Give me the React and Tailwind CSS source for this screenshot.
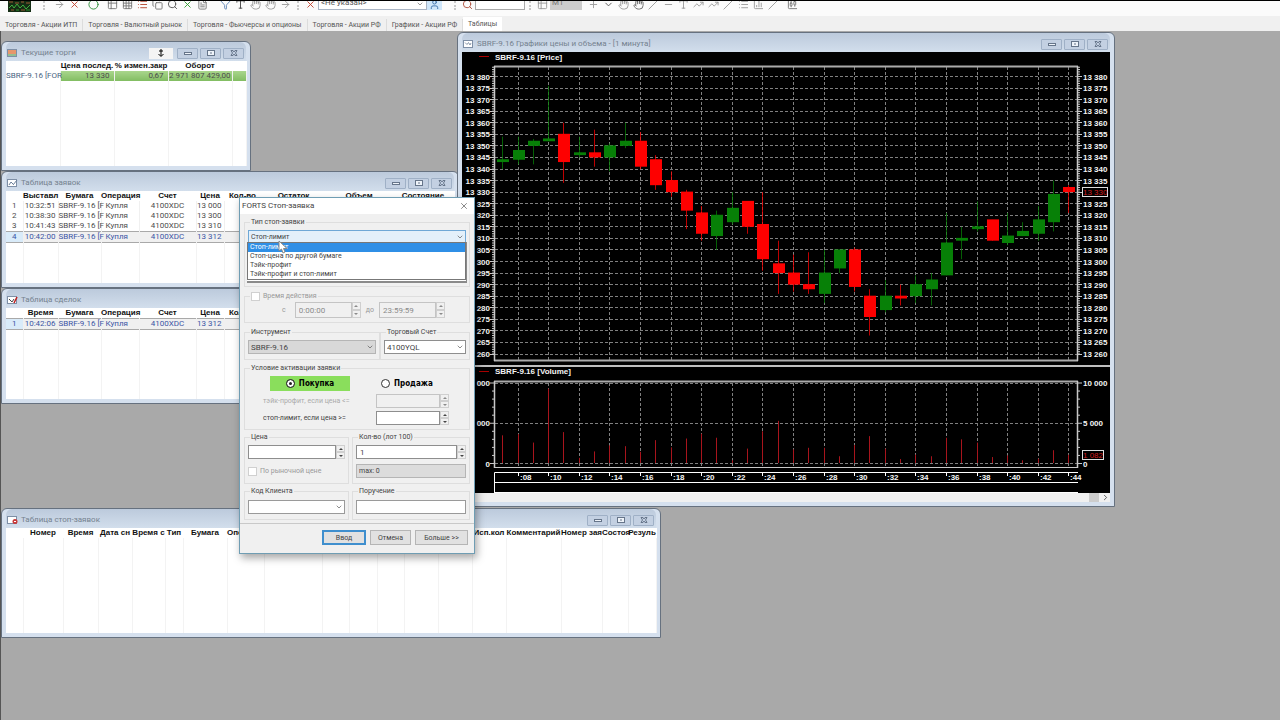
import React, { useState } from 'react';
import {
    ArrowRight, CandlestickChart, ChevronDown, ChevronRight, Circle, Copy, FileText, Filter, Grid3x3, Hand,
    List, Minus, Plus, Search, Table2, TrendingUp, Type, X, User, BarChart3, Slash,
} from 'lucide-react';

const tabs = [
    'Торговля - Акции ИТП',
    'Торговля - Валютный рынок',
    'Торговля - Фьючерсы и опционы',
    'Торговля - Акции РФ',
    'Графики - Акции РФ',
    'Таблицы',
];

// [high, body top, body bottom, low, rising, volume], one per minute
const candles = [
    [13354, 13344, 13343, 13340, true, 3500],
    [13354, 13348, 13344, 13342, true, 3650],
    [13353, 13352, 13350, 13342, true, 2600],
    [13376, 13353, 13352, 13352, true, 9300],
    [13360, 13355, 13343, 13334, false, 3900],
    [13354, 13347, 13346, 13345, true, 700],
    [13357, 13347, 13345, 13341, false, 1500],
    [13351, 13350, 13345, 13339, true, 2250],
    [13360, 13352, 13350, 13349, true, 2150],
    [13356, 13352, 13341, 13340, false, 1450],
    [13346, 13344, 13333, 13331, false, 2900],
    [13339, 13335, 13330, 13328, false, 2000],
    [13331, 13330, 13322, 13314, false, 3100],
    [13324, 13321, 13312, 13309, false, 3700],
    [13322, 13320, 13311, 13305, true, 3200],
    [13330, 13323, 13317, 13316, true, 400],
    [13326, 13326, 13315, 13312, false, 1850],
    [13330, 13316, 13301, 13296, false, 4000],
    [13309, 13299, 13295, 13286, false, 5300],
    [13303, 13295, 13290, 13287, false, 1750],
    [13304, 13290, 13288, 13286, false, 1950],
    [13305, 13295, 13286, 13282, true, 1950],
    [13305, 13305, 13297, 13295, true, 900],
    [13306, 13305, 13289, 13287, false, 2300],
    [13288, 13285, 13276, 13268, false, 3400],
    [13292, 13285, 13279, 13278, true, 1850],
    [13290, 13285, 13284, 13281, false, 550],
    [13294, 13290, 13285, 13282, true, 1100],
    [13295, 13292, 13288, 13281, true, 900],
    [13321, 13308, 13294, 13294, true, 3200],
    [13315, 13310, 13309, 13301, true, 3000],
    [13326, 13315, 13314, 13313, true, 2600],
    [13318, 13318, 13309, 13309, false, 800],
    [13321, 13311, 13308, 13307, true, 1000],
    [13317, 13313, 13311, 13311, true, 400],
    [13324, 13318, 13312, 13309, true, 600],
    [13335, 13329, 13317, 13313, true, 1650],
    [13333, 13332, 13330, 13321, false, 1082],
];

const candleX = (i) => 40.7 + i * 15.3;
const priceY = (p) => 24.5 + (13380 - p) * 2.3125;
const volumeY = (v) => 411.5 - v * 0.00805;
const priceText = (p) => `13 ${p - 13000}`;

const prices = Array.from({ length: 25 }, (_, i) => 13380 - i * 5);
const priceTicks = Array.from({ length: 125 }, (_, i) => 13384 - i);
const volumeTicks = Array.from({ length: 11 }, (_, i) => i * 1000);
const times = Array.from({ length: 19 }, (_, i) => ({ i: i * 2 + 1, label: `:${String(8 + i * 2).padStart(2, '0')}` }));

const PriceChart = () => (
    <svg viewBox="0 0 648 441" className="block w-full bg-black" fontFamily="'Liberation Sans', sans-serif" fontSize="8" fill="#f4f4f4">
        <path d="M17 4.5h10M17 319.5h10" stroke="#a00" />
        <text x="33" y="8" fontWeight="700">SBRF-9.16 [Price]</text>
        <text x="33" y="322" fontWeight="700">SBRF-9.16 [Volume]</text>

        <g stroke="#808080" strokeDasharray="3 2">
            {prices.map(p => <path key={p} d={`M33 ${Math.floor(priceY(p)) + 0.5}H615`} />)}
            {[0, 5000, 10000].map(v => <path key={v} d={`M33 ${Math.floor(volumeY(v)) + 0.5}H615`} />)}
            {times.map(t => <path key={t.i} d={`M${Math.floor(candleX(t.i)) + 0.5} 15V308M${Math.floor(candleX(t.i)) + 0.5} 331V415`} />)}
        </g>

        {candles.map(([high, top, bottom, low, up, volume], i) => {
            const x = Math.floor(candleX(i));
            const color = up ? '#078007' : '#fe0000';
            return (
                <g key={i}>
                    <path d={`M${x + 0.5} ${priceY(high)}V${priceY(low)}`} stroke={color} opacity="0.75" />
                    <rect x={x - 5} y={priceY(top) - 0.5} width="12" height={(top - bottom) * 2.3125 + 0.5} fill={color} />
                    <path d={`M${x + 0.5} ${volumeY(volume)}V411`} stroke="#a8141c" />
                </g>
            );
        })}

        <g fill="none" stroke="#c8c8c8">
            <path d="M32 14.5H616M32 308.5H616M32 329.5H616" stroke="#aaa" strokeWidth="2" />
            <path d="M32.5 14V309M615.5 14V309M32.5 329V416M615.5 329V416" strokeWidth="1.5" />
            <path d="M32 415.5H616" />
            <path d="M0 314H648" stroke="#fff" strokeWidth="1.5" />
            <path d="M32.5 441V420.5H616M32 430.5H616M32 440.5H616" stroke="#fff" />
            {priceTicks.map(p => <path key={p} d={`M30 ${priceY(p)}h2M616 ${priceY(p)}h2`} />)}
            {prices.map(p => <path key={p} d={`M28 ${Math.floor(priceY(p)) + 0.5}h4M616 ${Math.floor(priceY(p)) + 0.5}h4`} />)}
            {volumeTicks.map(v => <path key={v} d={`M${v % 5000 ? 30 : 28} ${volumeY(v)}H32M616 ${volumeY(v)}h${v % 5000 ? 2 : 4}`} />)}
        </g>

        {prices.map(p => (
            <g key={p} fontWeight="700">
                <text x="28" y={priceY(p) + 3} textAnchor="end">{priceText(p)}</text>
                {p !== 13330 && <text x="621" y={priceY(p) + 3}>{priceText(p)}</text>}
            </g>
        ))}
        {[['0', 0], ['5 000', 5000], ['10 000', 10000]].map(([label, v]) => (
            <g key={v} fontWeight="700">
                <text x="28" y={volumeY(v) + 3} textAnchor="end">{label}</text>
                <text x="621" y={volumeY(v) + 3}>{label}</text>
            </g>
        ))}
        {times.map(t => (
            <g key={t.label} fontWeight="700">
                <path d={`M${Math.floor(candleX(t.i)) + 0.5} 421v3`} stroke="#fff" />
                <text x={Math.floor(candleX(t.i)) + 2} y="428">{t.label}</text>
            </g>
        ))}

        <rect x="620.5" y="135.5" width="25" height="9" fill="#000" stroke="#ddd" />
        <text x="621" y="143" fill="#d01c1c">13 330</text>
        <rect x="620.5" y="398.5" width="21" height="9" fill="#000" stroke="#ddd" />
        <text x="621" y="406" fill="#d01c1c">1 082</text>
    </svg>
);

const TitleButton = ({ label, children }) => (
    <button type="button" aria-label={label} className="flex h-[11px] w-[21px] items-center justify-center rounded-[1px] border border-[#9fb0c6] bg-[#c3d0e2] text-[#66758a]">
        {children}
    </button>
);

const Window = ({ title, icon, pin, className, children }) => (
    <section className={`absolute flex flex-col rounded-t-md border border-[#66717f] bg-[#d5e0ee] px-1 pb-1 ${className}`}>
        <header className="flex h-[19px] shrink-0 items-center gap-[2px] rounded-t-md bg-linear-to-b from-[#bccadc] to-[#d2deec] pr-[2px] pl-px pt-[3px]">
            {icon}
            <h2 className="flex-1 pl-px text-[8px] leading-[10px] text-[#75828f] font-[Roboto,sans-serif] whitespace-nowrap">{title}</h2>
            {pin && (
                <button type="button" aria-label="Закрепить" className="mr-[2px] flex h-[11px] w-[24px] items-center justify-center bg-[#f4f4f4] text-black">
                    <svg viewBox="0 0 8 8" className="h-2 w-2" fill="none" stroke="currentColor"><path d="M4 0v7M2 2h4M1.500 5L4 7.500 6.500 5" /></svg>
                </button>
            )}
            <TitleButton label="Свернуть">
                <svg viewBox="0 0 8 6" className="h-[6px] w-2" fill="#eef3f9" stroke="currentColor"><rect x="0.500" y="2.500" width="7" height="2" /></svg>
            </TitleButton>
            <TitleButton label="Развернуть">
                <svg viewBox="0 0 8 6" className="h-[6px] w-2" fill="#eef3f9" stroke="currentColor"><rect x="0.500" y="0.500" width="7" height="5" /><path d="M3 3h2" /></svg>
            </TitleButton>
            <TitleButton label="Закрыть">
                <svg viewBox="0 0 8 6" className="h-[6px] w-2" fill="none" stroke="currentColor"><path d="M1 .5h2l1 1.500 1-1.500h2L5.500 3 7 5.500H5L4 4 3 5.500H1L2.500 3z" /></svg>
            </TitleButton>
        </header>
        {children}
    </section>
);

const Grid = ({ columns, rows, selected, rowClass = '' }) => (
    <table className="h-full w-full table-fixed border-collapse bg-white text-[8px] leading-[10px] text-[#4c4c4c] font-[Roboto,sans-serif]">
        <colgroup>
            {columns.map(([, width], i) => <col key={i} style={{ width }} />)}
        </colgroup>
        <thead>
            <tr className="h-[10px] text-[#111] font-['Liberation_Sans',sans-serif]">
                {columns.map(([label], i) => <th key={i} className="p-0 text-center font-bold whitespace-nowrap">{label}</th>)}
            </tr>
        </thead>
        <tbody>
            {rows.map((row, r) => (
                <tr key={r} className={`h-[10px] ${r === selected ? 'border-y border-[#a9a9a9] bg-[#f0f0f0] text-[#3b55a5]' : ''}`}>
                    {row.map((cell, c) => (
                        <td key={c} className={`border-r border-[#f0f0f0] py-0 whitespace-nowrap ${columns[c][2] || ''} ${c > 0 ? rowClass : ''} ${r === selected && c === 0 ? 'bg-[#d9ebf9]' : ''}`}>
                            {cell}
                        </td>
                    ))}
                </tr>
            ))}
            <tr>
                {columns.map((_, i) => <td key={i} className="border-r border-[#f3f3f3] p-0" />)}
            </tr>
        </tbody>
    </table>
);

const quoteColumns = [['', 54, 'text-[#4a6483]'], ['Цена послед.', 54, 'pr-1 text-right'], ['% измен.закр', 54, 'pr-1 text-right'], ['Оборот', 64, 'pr-px text-right'], ['', 14]];
const orderColumns = [
    ['', 17, 'text-center'], ['Выставл', 35, 'pr-[2px] text-right'], ['Бумага', 43], ['Операция', 38, 'pl-1'], ['Счет', 57, 'text-center'],
    ['Цена', 28, 'pr-[2px] text-right'], ['Кол-во', 37], ['Остаток', 65], ['Объем', 66], ['Состояние', 62],
];
const tradeColumns = [['', 17, 'text-center'], ['Время', 35, 'pr-[2px] text-right'], ...orderColumns.slice(2)];
const stopColumns = [
    ['', 17], ['Номер', 40], ['Время', 35], ['Дата сн', 34], ['Время с', 33], ['Тип', 18], ['Бумага', 44], ['Операция', 37],
    ['', 58], ['', 27], ['', 28], ['', 27], ['', 34], ['', 34], ['Исп.кол', 34], ['Комментарий', 55], ['Номер зая', 41],
    ['Состоя', 26], ['Резуль', 28],
];

const orderRow = (n, time, price) => [n, time, 'SBRF-9.16 [F', 'Купля', '4100XDC', price, '', '', '', ''];
const orders = [
    orderRow('1', '10:32:51', '13 000'),
    orderRow('2', '10:38:30', '13 300'),
    orderRow('3', '10:41:43', '13 310'),
    orderRow('4', '10:42:00', '13 312'),
];

const SheetIcon = ({ accent }) => (
    <svg viewBox="0 0 11 10" className="h-[10px] w-[11px]" fill="none">
        <rect x="0.500" y="1.500" width="9" height="7" fill="#fff" stroke="#7e8fa6" />
        {accent === 'chart' && <path d="M2 3.500l2 2 1.500-2L7 6l1-2" stroke="#8c9aad" />}
        {accent === 'quotes' && <><path d="M1 3h8M1 5h8" stroke="#e0763c" strokeWidth="1.500" /><path d="M1 7h8" stroke="#6fa86f" strokeWidth="1.500" /></>}
        {accent === 'orders' && <path d="M2 7l2-3 2 2M6 7l4-5" stroke="#6b7f99" />}
        {accent === 'trades' && <><path d="M2 4l3 3 2-3" stroke="#444" /><path d="M7 8l3-6" stroke="#c02020" strokeWidth="1.500" /></>}
        {accent === 'stop' && <><circle cx="8" cy="6.500" r="2.500" fill="#c93a3a" /><path d="M7 6.500h2" stroke="#fff" /></>}
    </svg>
);

const Group = ({ legend, className = '', children }) => (
    <fieldset className={`min-w-0 border border-[#dedede] px-[3px] ${className}`}>
        <legend className="mx-[2px] px-px leading-[10px]">{legend}</legend>
        {children}
    </fieldset>
);

const Combo = ({ label, options, className = '' }) => (
    <div className="relative">
        <select aria-label={label} className={`block h-[14px] w-full appearance-none border px-[2px] leading-[11px] ${className}`}>
            {options.map(o => <option key={o}>{o}</option>)}
        </select>
        <ChevronDown size={8} className="pointer-events-none absolute top-[3px] right-[2px] text-[#555]" />
    </div>
);

const Spin = ({ label, disabled, className = 'h-[14px]', ...props }) => (
    <div className={`flex text-[8px] ${disabled ? 'text-[#8a8a8a]' : ''} ${className}`}>
        <input aria-label={label} disabled={disabled} className={`h-full min-w-0 flex-1 border px-[3px] ${disabled ? 'border-[#c4c4c4] bg-[#f0f0f0]' : 'border-[#8e8e8e] bg-white'}`} {...props} />
        <div className="flex w-[9px] flex-col">
            <button type="button" aria-label="Больше" disabled={disabled} className="flex flex-1 items-center justify-center border border-[#cfcfcf] bg-[#f0f0f0]">
                <svg viewBox="0 0 4 2" className="h-[2px] w-1" fill="currentColor"><path d="M2 0l2 2H0z" /></svg>
            </button>
            <button type="button" aria-label="Меньше" disabled={disabled} className="flex flex-1 items-center justify-center border border-[#cfcfcf] bg-[#f0f0f0]">
                <svg viewBox="0 0 4 2" className="h-[2px] w-1" fill="currentColor"><path d="M2 2l2-2H0z" /></svg>
            </button>
        </div>
    </div>
);

const stopTypes = ['Стоп-лимит', 'Стоп-цена по другой бумаге', 'Тэйк-профит', 'Тэйк-профит и стоп-лимит'];

const StopOrderDialog = () => {
    const [side, setSide] = useState('buy');

    return (
        <form role="dialog" aria-label="FORTS Стоп-заявка" className="absolute top-[166px] left-[238px] w-[236px] border border-[#6f9db3] bg-[#f0f0f0] text-[7px] leading-[10px] text-[#444] shadow-[2px_4px_8px_rgba(0,0,0,0.35)] font-[Roboto,sans-serif]">
            <div className="flex h-4 items-center justify-between bg-white pr-[5px] pl-[2px]">
                <h2 className="text-[8px] text-[#444]">FORTS Стоп-заявка</h2>
                <button type="button" aria-label="Закрыть"><X size={10} strokeWidth={1.5} /></button>
            </div>

            <div className="flex flex-col px-1 pt-[3px]">
                <div className="relative">
                    <Group legend="Тип стоп-заявки" className="h-[70px] pt-[3px]">
                        <Combo label="Тип стоп-заявки" options={stopTypes} className="border-[#6fa8d6] bg-[#e3f0fa]" />
                    </Group>
                    <div className="absolute inset-x-[3px] top-[25px] h-[41px] border-r border-b-2 border-[#8a8a8a] bg-white">
                        <ul role="listbox" aria-label="Варианты" className="border border-[#777] bg-white">
                            {stopTypes.map((t, i) => (
                                <li key={t} role="option" aria-selected={i === 0} className={`h-[9px] pl-[2px] leading-[9px] ${i === 0 ? 'bg-[#2f8fe6] text-white' : ''}`}>{t}</li>
                            ))}
                        </ul>
                    </div>
                </div>

                <Group
                    className="mt-1 h-8 pt-px"
                    legend={<label className="flex items-center gap-[3px] text-[#9a9a9a]"><input type="checkbox" disabled className="h-[9px] w-[9px] appearance-none border border-[#d0d0d0] bg-white" />Время действия</label>}
                >
                    <div className="flex items-center justify-end gap-[5px] pr-[21px] text-[#999]">
                        <span className="pr-1">с</span>
                        <Spin label="Время с" disabled defaultValue="0:00:00" className="h-4 w-[66px]" />
                        <span>до</span>
                        <Spin label="Время до" disabled defaultValue="23:59:59" className="h-4 w-[66px]" />
                    </div>
                </Group>

                <div className="mt-1 grid grid-cols-[136px_1fr]">
                    <Group legend="Инструмент" className="h-[33px] pt-[3px]">
                        <Combo label="Инструмент" options={['SBRF-9.16']} className="border-[#b5b5b5] bg-[#d8d8d8] text-[8px]" />
                    </Group>
                    <Group legend="Торговый Счет" className="h-[33px] pt-[3px]">
                        <Combo label="Торговый Счет" options={['4100YQL']} className="border-[#8e8e8e] bg-white text-[8px]" />
                    </Group>
                </div>

                <Group legend="Условие активации заявки" className="mt-[3px] h-[67px] pt-[3px]">
                    <div className="flex h-[15px] gap-[31px] pl-[22px] text-[8px] text-black font-bold font-['DejaVu_Sans_Condensed','DejaVu_Sans',sans-serif]">
                        <label className="flex w-20 items-center justify-center gap-1 bg-[#8ade5c]">
                            <input type="radio" name="side" checked={side === 'buy'} onChange={() => setSide('buy')} className="h-[9px] w-[9px] appearance-none rounded-full border border-[#333] bg-white checked:bg-[#222] checked:shadow-[inset_0_0_0_2px_#fff]" />
                            Покупка
                        </label>
                        <label className="flex items-center gap-1">
                            <input type="radio" name="side" checked={side === 'sell'} onChange={() => setSide('sell')} className="h-[9px] w-[9px] appearance-none rounded-full border border-[#333] bg-white checked:bg-[#222] checked:shadow-[inset_0_0_0_2px_#fff]" />
                            Продажа
                        </label>
                    </div>
                    <div className="mt-[3px] flex items-center justify-between pr-[17px] pl-[15px]">
                        <span className="text-[#aaa]">тэйк-профит, если цена &lt;=</span>
                        <Spin label="тэйк-профит, если цена <=" disabled className="h-[14px] w-[73px]" />
                    </div>
                    <div className="mt-[3px] flex items-center justify-between pr-[17px] pl-[15px]">
                        <span>стоп-лимит, если цена &gt;=</span>
                        <Spin label="стоп-лимит, если цена >=" className="h-[14px] w-[73px]" />
                    </div>
                </Group>

                <div className="mt-[2px] grid grid-cols-[105px_1fr] gap-x-[3px] gap-y-[2px]">
                    <Group legend="Цена" className="h-[52px] pt-[3px]">
                        <Spin label="Цена" />
                        <label className="mt-[5px] flex h-[14px] items-center gap-[3px] text-[#999]">
                            <input type="checkbox" disabled className="h-[9px] w-[9px] appearance-none border border-[#d0d0d0] bg-white" />
                            По рыночной цене
                        </label>
                    </Group>
                    <Group legend="Кол-во (лот 100)" className="h-[52px] pt-[3px]">
                        <Spin label="Кол-во" defaultValue="1" />
                        <input aria-label="Максимум" readOnly value="max: 0" className="mt-[5px] block h-[14px] w-full border border-[#b5b5b5] bg-[#dcdcdc] px-[2px]" />
                    </Group>
                    <Group legend="Код Клиента" className="h-[34px] pt-1">
                        <Combo label="Код Клиента" options={['']} className="border-[#9a9a9a] bg-white" />
                    </Group>
                    <Group legend="Поручение" className="h-[34px] pt-1">
                        <input aria-label="Поручение" className="block h-[14px] w-full border border-[#9a9a9a] bg-white px-1" />
                    </Group>
                </div>
            </div>

            <div className="mt-[3px] flex justify-end gap-1 border-t border-[#c9c9c9] px-[6px] pt-[6px] pb-2">
                <button type="submit" className="flex h-[15px] w-11 items-center justify-center border border-[#3f8fce] bg-[#e1e1e1] ring-1 ring-[#3f8fce] ring-inset">Ввод</button>
                <button type="button" className="h-[15px] w-[41px] border border-[#b5b5b5] bg-[#e1e1e1]">Отмена</button>
                <button type="button" className="h-[15px] w-[53px] border border-[#b5b5b5] bg-[#e1e1e1]">Больше &gt;&gt;</button>
            </div>

            <svg viewBox="0 0 10 14" className="pointer-events-none absolute top-[42px] left-[38px] h-[14px] w-[10px]" fill="#fff" stroke="#888">
                <path d="M1 1v10l2.500-2 1.500 4 2-1-1.500-3.500H9z" />
            </svg>
        </form>
    );
};

const ToolButton = ({ icon: Icon, label, className = 'text-[#9a9a9a]' }) => (
    <button type="button" aria-label={label} className={`flex w-[15px] shrink-0 justify-center ${className}`}><Icon size={11} /></button>
);

const Grip = () => <span className="mx-1 h-4 border-l-2 border-dotted border-[#c9c9c9]" />;

const Toolbar = () => (
    <div role="toolbar" aria-label="Инструменты" className="flex h-4 items-end overflow-hidden border-t border-black bg-[#fbfbfb] pb-1 pl-2">
        <svg viewBox="0 0 23 12" className="h-3 w-[23px] shrink-0">
            <rect width="23" height="12" fill="#142c14" />
            <path d="M1 8l3-3 2 3 3-4 3 4 3-3 3 4 4-4" stroke="#3fae3f" fill="none" />
            <path d="M1 2h4M7 3h4M13 2h3M18 3h4M3 10h3M13 10h4" stroke="#9a5a34" />
            <path d="M8 10h3M18 10h4" stroke="#2f8f2f" />
        </svg>
        <div className="flex items-end pb-[2px] pl-2">
            <Grip />
            <span className="w-[3px]" />
            <ToolButton icon={ArrowRight} label="Соединение" />
            <ToolButton icon={X} label="Разъединить" className="text-[#c2402c]" />
            <ToolButton icon={Circle} label="Обновить" className="ml-1 text-[#2f8f3a]" />
            <ToolButton icon={Table2} label="Таблица" className="ml-1 text-[#777]" />
            <ToolButton icon={Grid3x3} label="Сетка" className="text-[#777]" />
            <ToolButton icon={List} label="Список" className="text-[#b5442c]" />
            <ToolButton icon={Copy} label="Копия" className="text-[#777]" />
            <ToolButton icon={Search} label="Найти" className="text-[#555]" />
            <ToolButton icon={X} label="Excel" className="text-[#2f9a2f]" />
            <ToolButton icon={FileText} label="Документ" className="text-[#777]" />
            <ToolButton icon={Filter} label="Фильтр" className="ml-2 text-[#5f86b8]" />
            <ToolButton icon={Type} label="Текст" className="text-[#444]" />
            <ToolButton icon={Hand} label="Рука" />
            <ToolButton icon={Hand} label="Захват" />
            <ToolButton icon={ArrowRight} label="Далее" />
            <Grip />
            <ToolButton icon={X} label="Снять фильтр" className="text-[#c2402c]" />
            <div className="relative">
                <select aria-label="Фильтр" className="block h-[14px] w-[109px] appearance-none border border-[#a9b4c4] bg-white px-[2px] text-[8px] leading-[10px] text-[#555] font-[Roboto,sans-serif]">
                    <option>&lt;Не указан&gt;</option>
                </select>
                <ChevronDown size={8} className="pointer-events-none absolute right-[3px] bottom-[2px] text-[#666]" />
            </div>
            <ToolButton icon={User} label="Клиент" className="bg-[#cfe6fa] text-[#3a6ea8]" />
            <span className="w-2" />
            <Grip />
            <ToolButton icon={Search} label="Поиск" className="text-[#b0503c]" />
            <input aria-label="Строка поиска" className="h-[14px] w-[50px] border border-[#a9a9a9] bg-white" />
            <Grip />
            <ToolButton icon={Table2} label="График" />
            <button type="button" className="mr-1 flex h-[14px] w-8 shrink-0 items-center bg-[#cdcdcd] pl-[2px] text-[8px] leading-[10px] text-[#777] font-[Roboto,sans-serif]">М1</button>
            <ToolButton icon={Plus} label="Добавить" />
            <ToolButton icon={ChevronDown} label="Стрелка" className="text-[#555]" />
            <ToolButton icon={Hand} label="Сдвиг" />
            <ToolButton icon={Hand} label="Перенос" className="text-[#666]" />
            <ToolButton icon={Slash} label="Линия" />
            <ToolButton icon={Minus} label="Горизонталь" />
            <ToolButton icon={Type} label="Вертикаль" />
            <ToolButton icon={TrendingUp} label="Веер" />
            <ToolButton icon={TrendingUp} label="Тренд" />
            <ToolButton icon={Slash} label="Луч" />
            <ToolButton icon={List} label="Уровни" />
            <ToolButton icon={BarChart3} label="Зоны" />
            <ToolButton icon={Slash} label="Отрезок" />
            <ToolButton icon={CandlestickChart} label="Свечи" className="ml-1 text-[#777]" />
        </div>
    </div>
);

const App = () => {
    const [tab, setTab] = useState('Таблицы');

    return (
        <div className="flex min-h-screen flex-col overflow-hidden bg-[#a9a9a9]">
            <Toolbar />
            <nav role="tablist" className="flex h-[15px] items-end bg-[#f0f0f0] text-[7px] leading-[10px] text-[#555] font-[Roboto,sans-serif]">
                {tabs.map(t => (
                    <button
                        key={t}
                        type="button"
                        role="tab"
                        aria-selected={t === tab}
                        onClick={() => setTab(t)}
                        className={`shrink-0 px-[5px] whitespace-nowrap ${t === tab ? 'h-[14px] bg-white' : 'h-3 border-r border-[#dcdcdc]'}`}
                    >
                        {t}
                    </button>
                ))}
            </nav>

            <main className="relative flex-1 border-l border-[#555] bg-[#a9a9a9]">
                <Window title="Текущие торги" pin icon={<SheetIcon accent="quotes" />} className="top-[10px] left-0 h-[130px] w-[250px]">
                    <Grid
                        columns={quoteColumns}
                        rows={[['SBRF-9.16 [FOR', '13 330', '0,67', '2 971 807 429,00', '']]}
                        rowClass="bg-linear-to-b from-[#a9d68c] to-[#82bd62]"
                    />
                </Window>

                <Window title="Таблица заявок" icon={<SheetIcon accent="orders" />} className="top-[140px] left-0 h-[117px] w-[458px]">
                    <Grid columns={orderColumns} rows={orders} selected={3} />
                </Window>

                <Window title="Таблица сделок" icon={<SheetIcon accent="trades" />} className="top-[257px] left-0 h-[116px] w-[458px]">
                    <Grid columns={tradeColumns} rows={[orderRow('1', '10:42:06', '13 312')]} selected={0} />
                </Window>

                <Window title="Таблица стоп-заявок" icon={<SheetIcon accent="stop" />} className="top-[477px] left-0 h-[130px] w-[660px]">
                    <Grid columns={stopColumns} rows={[]} />
                </Window>

                <Window title="SBRF-9.16 Графики цены и объема - [1 минута]" icon={<SheetIcon accent="chart" />} className="top-px left-[456px] w-[658px]">
                    <PriceChart />
                    <div className="flex h-[9px] items-center justify-end gap-[2px] bg-[#f0f0f0]">
                        <span className="h-full w-[10px] bg-[#cdcdcd]" />
                        <button type="button" aria-label="Вправо" className="text-[#333]"><ChevronRight size={9} /></button>
                    </div>
                </Window>

                <StopOrderDialog />
            </main>
        </div>
    );
};

export default App;
